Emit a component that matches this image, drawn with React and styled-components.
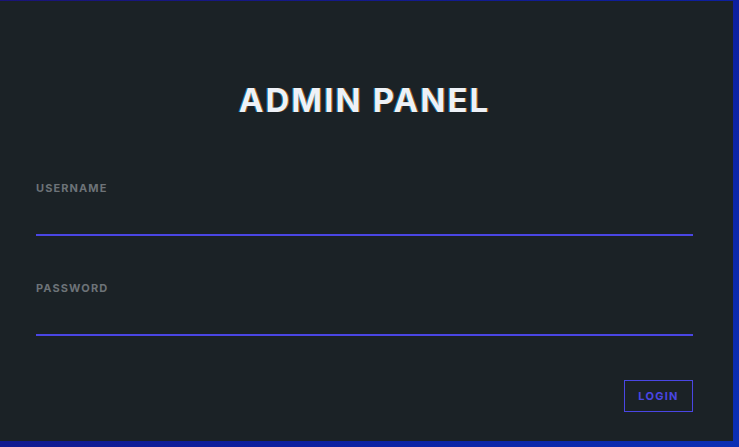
import React from "react";
import styled, { createGlobalStyle } from "styled-components";

const Global = createGlobalStyle`
  html, body { margin: 0; padding: 0; }
  body {
    width: 739px;
    height: 447px;
    overflow: hidden;
    background: linear-gradient(135deg, #1a1478 0%, #0d1f9e 60%, #0b2fb4 100%);
    font-family: Inter, "Liberation Sans", sans-serif;
  }
`;

const Page = styled.div`
  padding-top: 1px;
`;

const Card = styled.form`
  box-sizing: border-box;
  width: 733px;
  height: 440px;
  background: #1b2226;
  padding: 79px 40px 0 36px;
  display: flex;
  flex-direction: column;
`;

const Title = styled.h1`
  margin: 0;
  font-size: 33px;
  line-height: 40px;
  font-weight: 700;
  letter-spacing: 2.1px;
  text-align: center;
  color: #eef1f7;
  text-shadow: -1px 0 rgba(0, 190, 255, 0.55), 1px 0 rgba(255, 130, 20, 0.55);
`;

const Fields = styled.div`
  margin-top: 62px;
  display: flex;
  flex-direction: column;
  gap: 46px;
`;

const Field = styled.label`
  display: flex;
  flex-direction: column;
`;

const Label = styled.span`
  font-size: 11px;
  line-height: 13px;
  font-weight: 700;
  letter-spacing: 1.1px;
  color: #6d7378;
`;

const Input = styled.input`
  box-sizing: border-box;
  height: 41px;
  background: transparent;
  border: none;
  border-bottom: 2px solid #4a46e4;
  outline: none;
  color: #eef1f7;
  font-family: inherit;
  font-size: 14px;
  padding: 0;
`;

const Actions = styled.div`
  margin-top: 44px;
  display: flex;
  justify-content: flex-end;
`;

const Button = styled.button`
  box-sizing: border-box;
  width: 69px;
  height: 32px;
  background: transparent;
  border: 1px solid #4a46e4;
  color: #4a46e4;
  font-family: inherit;
  font-size: 11px;
  font-weight: 700;
  letter-spacing: 1.3px;
  padding: 0;
  cursor: pointer;
`;

export default function App() {
  return (
    <Page>
      <Global />
      <Card onSubmit={(e) => e.preventDefault()}>
        <Title>ADMIN PANEL</Title>
        <Fields>
          <Field>
            <Label>USERNAME</Label>
            <Input type="text" />
          </Field>
          <Field>
            <Label>PASSWORD</Label>
            <Input type="password" />
          </Field>
        </Fields>
        <Actions>
          <Button type="submit">LOGIN</Button>
        </Actions>
      </Card>
    </Page>
  );
}
